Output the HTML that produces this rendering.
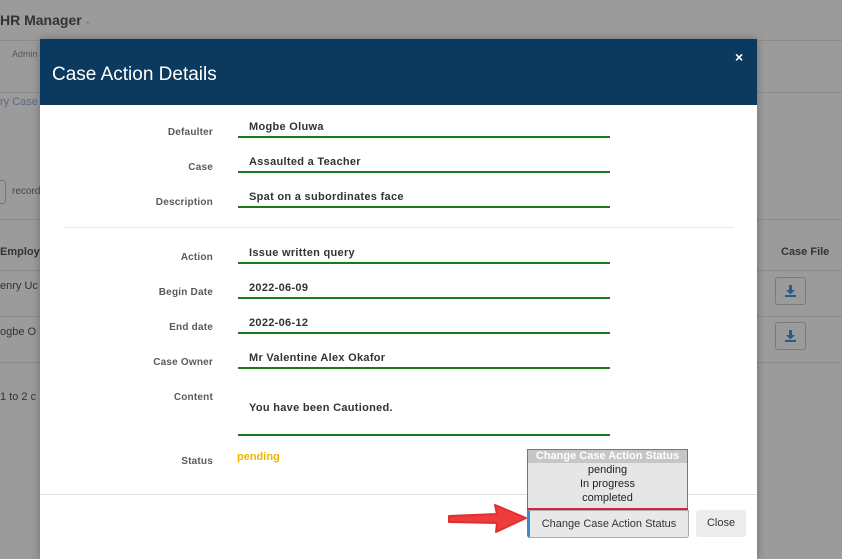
<!DOCTYPE html>
<html><head><style>
*{margin:0;padding:0;box-sizing:border-box}
body{width:842px;height:550px;overflow:hidden;background:#9b9b9b;font-family:"Liberation Sans",sans-serif;position:relative}
.a{position:absolute;white-space:nowrap}
.bg{color:#3a3a3a}
.hl{position:absolute;height:1px;background:#8c8c8c}
.modal{position:absolute;left:40px;top:39px;width:717px;height:520px;background:#fff;box-shadow:0 0 8px rgba(0,0,0,.3)}
.hdr{position:absolute;left:0;top:0;width:717px;height:66px;background:#0b3a5e}
.lb{position:absolute;right:544px;font-size:10px;font-weight:bold;color:#5a5a5a;letter-spacing:.2px;text-align:right}
.v{position:absolute;left:209px;font-size:11px;font-weight:bold;color:#333;letter-spacing:.3px}
.u{position:absolute;left:198px;width:372px;height:1.5px;background:#1a7a1a}
.dl{position:absolute;width:31px;height:28px;border:1px solid #7a7a7a;border-radius:3px}
</style></head><body>
<div class="a bg" style="left:0;top:12px;font-size:14px;font-weight:bold;color:#333">HR Manager <span style="color:#888;font-size:8px">●</span></div>
<div class="hl" style="left:0;top:40px;width:842px"></div>
<div class="a" style="left:12px;top:49px;font-size:9px;color:#555">Admin</div>
<div class="hl" style="left:0;top:92px;width:842px"></div>
<div class="a" style="left:0;top:96px;font-size:11px;color:#5a6a8a">ry Case</div>
<div class="a" style="left:-6px;top:180px;width:12px;height:24px;border:1px solid #777;border-radius:3px"></div>
<div class="a" style="left:12px;top:186px;font-size:10px;color:#444">record</div>
<div class="hl" style="left:0;top:219px;width:842px"></div>
<div class="a" style="left:0;top:246px;font-size:11px;font-weight:bold;color:#333">Employ</div>
<div class="a" style="left:781px;top:246px;font-size:11px;font-weight:bold;color:#333">Case File</div>
<div class="hl" style="left:0;top:270px;width:842px"></div>
<div class="a" style="left:0;top:280px;font-size:11px;color:#333">enry Uc</div>
<div class="hl" style="left:0;top:316px;width:842px"></div>
<div class="a" style="left:0;top:326px;font-size:11px;color:#333">ogbe O</div>
<div class="hl" style="left:0;top:362px;width:842px"></div>
<div class="a" style="left:0;top:391px;font-size:11px;color:#333">1 to 2 c</div>
<div class="dl" style="left:775px;top:277px"><svg width="29" height="26" viewBox="0 0 29 26"><path d="M13 7h3v5h3l-4.5 4.5L10 12h3z M9 17h11v2H9z" fill="#2a5a8a"/></svg></div>
<div class="dl" style="left:775px;top:322px"><svg width="29" height="26" viewBox="0 0 29 26"><path d="M13 7h3v5h3l-4.5 4.5L10 12h3z M9 17h11v2H9z" fill="#2a5a8a"/></svg></div>

<div class="modal">
<div class="hdr"></div>
<div class="a" style="left:12px;top:25px;font-size:19px;color:#fff">Case Action Details</div>
<div class="a" style="left:695px;top:10px;font-size:14px;font-weight:bold;color:#fff">×</div>

<div class="lb" style="top:88px">Defaulter</div><div class="v" style="top:82px">Mogbe Oluwa</div><div class="u" style="top:97px"></div>
<div class="lb" style="top:123px">Case</div><div class="v" style="top:117px">Assaulted a Teacher</div><div class="u" style="top:132px"></div>
<div class="lb" style="top:158px">Description</div><div class="v" style="top:152px">Spat on a subordinates face</div><div class="u" style="top:167px"></div>
<div class="a" style="left:24px;top:188px;width:670px;height:1px;background:#e8e8e8"></div>
<div class="lb" style="top:213px">Action</div><div class="v" style="top:208px">Issue written query</div><div class="u" style="top:223px"></div>
<div class="lb" style="top:248px">Begin Date</div><div class="v" style="top:243px">2022-06-09</div><div class="u" style="top:258px"></div>
<div class="lb" style="top:283px">End date</div><div class="v" style="top:278px">2022-06-12</div><div class="u" style="top:293px"></div>
<div class="lb" style="top:318px">Case Owner</div><div class="v" style="top:313px">Mr Valentine Alex Okafor</div><div class="u" style="top:328px"></div>
<div class="lb" style="top:353px">Content</div><div class="v" style="top:363px">You have been Cautioned.</div><div class="u" style="top:395px"></div>
<div class="lb" style="top:417px">Status</div>
<div class="a" style="left:197px;top:412px;font-size:11px;font-weight:bold;color:#f0b400">pending</div>
<div class="a" style="left:0;top:455px;width:717px;height:1px;background:#e0e0e0"></div>
</div>

<div class="a" style="left:527px;top:449px;width:161px;height:60px;border:1px solid #777;background:#e6e6e6;font-size:11px;color:#222;text-align:center;line-height:14px">
<div style="background:#c6c6c6;color:#fff;font-weight:bold;height:13px;line-height:13px">Change Case Action Status</div>
<div>pending</div><div>In progress</div><div>completed</div></div>
<div class="a" style="left:527px;top:508px;width:161px;height:3px;background:#d0283a"></div>
<div class="a" style="left:527px;top:510px;width:162px;height:28px;background:#e8e8e8;border:1px solid #aaa;border-left:3px solid #3a8ad0;border-radius:0 0 3px 3px;font-size:11px;color:#333;text-align:center;line-height:27px">Change Case Action Status</div>
<div class="a" style="left:696px;top:510px;width:50px;height:27px;background:#ececec;border-radius:3px;font-size:11px;color:#333;text-align:center;line-height:27px">Close</div>
<svg class="a" style="left:445px;top:501px" width="84" height="34" viewBox="0 0 84 34"><path d="M4 15 L52 13 L50 4 L81 17 L51 31 L52 22 L4 21 Z" fill="#ee3b3b" stroke="#e03030" stroke-linejoin="round" stroke-width="2"/></svg>
</body></html>
